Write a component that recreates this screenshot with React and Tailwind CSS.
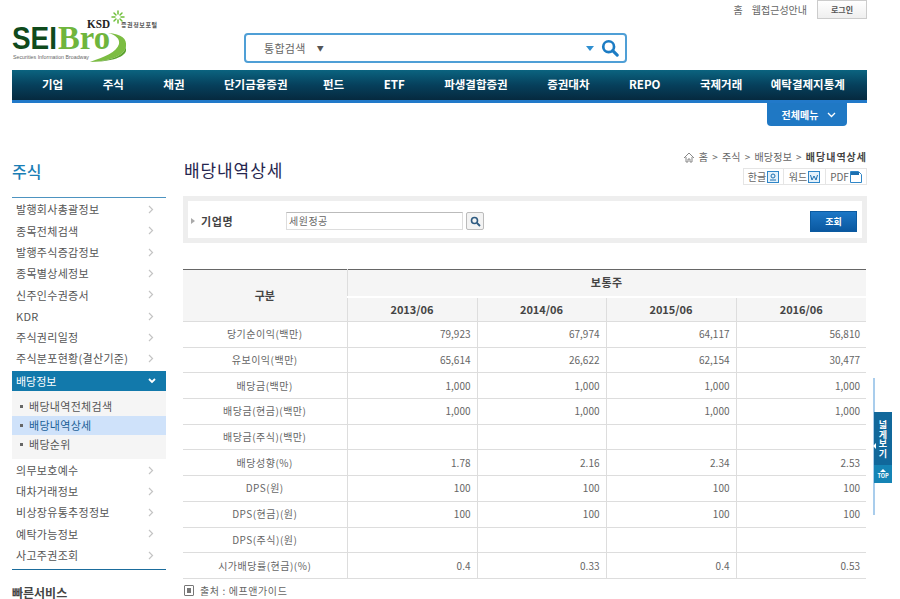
const K = { fontFamily: '"Noto Sans CJK KR", "Noto Sans", sans-serif' };
const nav = ['기업','주식','채권','단기금융증권','펀드','ETF','파생결합증권','증권대차','REPO','국제거래','예탁결제지통계'];
const side1 = ['발행회사총괄정보','종목전체검색','발행주식증감정보','종목별상세정보','신주인수권증서','KDR','주식권리일정','주식분포현황(결산기준)'];
const side2 = ['의무보호예수','대차거래정보','비상장유통추정정보','예탁가능정보','사고주권조회'];
const rows = [
  ['당기순이익(백만)','79,923','67,974','64,117','56,810'],
  ['유보이익(백만)','65,614','26,622','62,154','30,477'],
  ['배당금(백만)','1,000','1,000','1,000','1,000'],
  ['배당금(현금)(백만)','1,000','1,000','1,000','1,000'],
  ['배당금(주식)(백만)','','','',''],
  ['배당성향(%)','1.78','2.16','2.34','2.53'],
  ['DPS(원)','100','100','100','100'],
  ['DPS(현금)(원)','100','100','100','100'],
  ['DPS(주식)(원)','','','',''],
  ['시가배당률(현금)(%)','0.4','0.33','0.4','0.53'],
];

function Chevron() {
  return <svg width="6" height="9" viewBox="0 0 6 9" className="shrink-0"><path d="M1 1l3.5 3.5L1 8" fill="none" stroke="#c4c4c4" strokeWidth="1.2"/></svg>;
}
function Logo() {
  return (
    <div className="relative w-[150px] h-[58px] shrink-0">
      <svg width="150" height="58" viewBox="0 0 150 58" className="block">
        <path d="M96 23C110 24 115 29 114 36C113 45 100 51 78 52C92 47 105 42 107 34C108 29 104 25 96 23z" fill="#7cbd42"/>
        <path d="M114 36C113 45 100 51 78 52C96 52 112 48 114 41z" fill="#5ca32e"/>
        <text x="0" y="39" fontFamily="Liberation Sans" fontWeight="700" fontSize="32" fill="#0f4a1c" textLength="45" lengthAdjust="spacingAndGlyphs">SEI</text>
        <text x="46" y="39" fontFamily="Liberation Serif" fontWeight="700" fontSize="33" fill="#6fb53c" textLength="52" lengthAdjust="spacingAndGlyphs">Bro</text>
        <text x="75" y="18" fontFamily="Liberation Serif" fontWeight="700" fontSize="12" fill="#222" textLength="23" lengthAdjust="spacingAndGlyphs">KSD</text>
        <g stroke="#6fbf3a" strokeWidth="1.5" strokeLinecap="round">
          <path d="M106 4v-3M106 10v3M103 7h-3M109 7h3M104 5l-2-2M108 5l2-2M104 9l-2 2M108 9l2 2"/>
        </g>
        <text x="109" y="17" fontSize="6" fontWeight="700" fill="#555" style={K} textLength="36">증권정보포털</text>
        <text x="1" y="49" fontFamily="Liberation Sans" fontSize="6.2" fill="#666" textLength="76" lengthAdjust="spacingAndGlyphs">Securities Information Broadway</text>
      </svg>
    </div>
  );
}
function HwpIcon() {
  return <svg width="12" height="12" viewBox="0 0 12 12"><rect x=".5" y=".5" width="11" height="11" fill="#e3f1fb" stroke="#2f86c8"/><circle cx="6" cy="5" r="2" fill="none" stroke="#1c6fb0"/><path d="M3 9h6" stroke="#1c6fb0"/></svg>;
}
function WordIcon() {
  return <svg width="12" height="12" viewBox="0 0 12 12"><rect x=".5" y=".5" width="11" height="11" fill="#e3f1fb" stroke="#2f86c8"/><path d="M2.5 4l1.5 5 2-4 2 4 1.5-5" fill="none" stroke="#1c6fb0"/></svg>;
}
function PdfIcon() {
  return <svg width="12" height="12" viewBox="0 0 12 12"><path d="M.5.5h8l3 3v8h-11z" fill="#fff" stroke="#2f86c8"/><rect x="1" y="1" width="8" height="3" fill="#1c6fb0"/></svg>;
}

export default function App() {
  return (
    <div className="relative w-[900px] h-[599px] overflow-hidden bg-white text-[#555]" style={K}>
      {/* header */}
      <header className="relative mx-[12px] w-[855px] h-[103px]">
        <div className="flex justify-end items-center h-[19px] text-[10px] text-[#666] leading-none">
          <span className="mr-[9px]">홈</span>
          <span className="mr-[10px]">웹접근성안내</span>
          <span className="flex items-center justify-center w-[50px] h-[19px] border border-[#ccc] bg-gradient-to-b from-white to-[#efefef] text-[8px] font-bold text-[#555]">로그인</span>
        </div>
        <div className="flex h-[51px] items-start">
          <div className="-mt-[9px]"><Logo /></div>
          <div className="ml-[82px] mt-[14px] flex items-center w-[383px] h-[30px] border-2 border-[#4f9fd6] rounded-[4px] pl-[18px] pr-[4px]">
            <span className="text-[11px] text-[#666] tracking-[0.3px]">통합검색</span>
            <span className="ml-[11px] text-[7px] text-[#555]">▼</span>
            <svg width="8" height="5" viewBox="0 0 8 5" className="ml-auto mr-[7px]"><path d="M0 0h8L4 5z" fill="#2f8fd0"/></svg>
            <svg width="18" height="18" viewBox="0 0 20 20" className="mr-[2px]"><circle cx="8.5" cy="8.5" r="6" fill="none" stroke="#1c7cc4" strokeWidth="3"/><path d="M13 13l5 5" stroke="#1c7cc4" strokeWidth="3.4" strokeLinecap="round"/></svg>
          </div>
        </div>
        <nav className="flex items-center h-[33px] pl-[30px] gap-[39.5px] border-b-[3px] border-[#2179c9] bg-gradient-to-b from-[#0b6480] via-[#06405c] to-[#05293f] text-white text-[11.5px] font-bold leading-none whitespace-nowrap">
          {nav.map((n, i) => <span key={i} className={i === 10 ? '-ml-[11px]' : i === 3 ? 'mr-[-4px]' : ''}>{n}</span>)}
        </nav>
        <div className="absolute left-[755px] top-[103px] flex items-center justify-center gap-[9px] pl-[4px] w-[80px] h-[23px] bg-[#1f78c4] rounded-b-[4px] text-white text-[10px] font-bold leading-none">
          <span>전체메뉴</span>
          <svg width="9" height="6" viewBox="0 0 9 6"><path d="M1 1l3.5 3.5L8 1" fill="none" stroke="#fff" strokeWidth="1.3"/></svg>
        </div>
      </header>

      {/* body */}
      <div className="flex mx-[12px] w-[855px] pt-[50px] items-start">
        <aside className="w-[154px] shrink-0">
          <h2 className="h-[44px] pt-[7px] text-[16px] font-medium leading-[22px] text-[#1a7eb5]">주식</h2>
          <ul className="border-t border-[#4d93c0] pt-[1px] text-[11px] text-[#555]">
            {side1.map(s => (
              <li key={s} className="flex items-center justify-between h-[21.3px] pl-[4px] pr-[12px] tracking-[0.3px]"><span>{s}</span><Chevron /></li>
            ))}
          </ul>
          <div className="flex items-center justify-between h-[20px] mt-[2px] pl-[4px] pr-[10px] bg-[#1279ab] text-[11px] text-white">
            <span>배당정보</span>
            <svg width="8" height="6" viewBox="0 0 8 6"><path d="M1 1l3 3 3-3" fill="none" stroke="#fff" strokeWidth="1.8"/></svg>
          </div>
          <ul className="h-[68px] bg-[#f5f5f5] pt-[6px] text-[11px] leading-none text-[#555]">
            {['배당내역전체검색','배당내역상세','배당순위'].map((s, i) => (
              <li key={s} className={`flex items-center h-[19px] pl-[8px] tracking-[0.3px] ${i === 1 ? 'bg-[#cfe2fa] text-[#1a5e96]' : ''}`}>
                <span className="w-[3px] h-[3px] bg-[#666] mr-[6px]" />{s}
              </li>
            ))}
          </ul>
          <ul className="pb-[3px] text-[11px] text-[#555] border-b border-[#1b6c9c]">
            {side2.map(s => (
              <li key={s} className="flex items-center justify-between h-[21.3px] pl-[4px] pr-[12px] tracking-[0.3px]"><span>{s}</span><Chevron /></li>
            ))}
          </ul>
          <div className="mt-[17px] h-[12px] text-[12px] font-bold leading-[12px] text-[#444]">빠른서비스</div>
        </aside>

        <main className="ml-[17px] w-[684px] shrink-0">
          <div className="flex justify-end items-center h-[14px] mt-[-3px] text-[10px] text-[#666] leading-none tracking-[0.2px] gap-[4px]">
            <svg width="12" height="11" viewBox="0 0 12 11"><path d="M1 6l5-5 5 5M3 5v5h2V7h2v3h2V5" fill="none" stroke="#888" strokeWidth="1"/></svg>
            <span>홈</span><span>&gt;</span><span>주식</span><span>&gt;</span><span>배당정보</span><span>&gt;</span>
            <span className="font-bold text-[#444] tracking-[1px]">배당내역상세</span>
          </div>
          <div className="flex justify-between items-start mt-[1px]">
            <h1 className="-mt-[7px] pl-[1px] text-[17px] font-normal leading-[24px] tracking-[0.9px] text-[#26264f]">배당내역상세</h1>
            <div className="flex mt-[3px] h-[17px] border border-[#e5e5e5] text-[10px] text-[#666] leading-none">
              <span className="flex items-center gap-[1px] w-[40px] justify-center border-r border-[#e5e5e5]">한글<HwpIcon /></span>
              <span className="flex items-center gap-[1px] w-[42px] justify-center border-r border-[#e5e5e5]">워드<WordIcon /></span>
              <span className="flex items-center gap-[1px] w-[40px] justify-center">PDF<PdfIcon /></span>
            </div>
          </div>
          <div className="flex items-center mt-[11px] h-[47px] border-[5px] border-[#eeeeee] pt-[3px] pl-[3px] pr-[5px]">
            <svg width="4" height="6" viewBox="0 0 4 6"><path d="M0 0l4 3-4 3z" fill="#aaa"/></svg>
            <span className="ml-[6px] w-[85px] text-[11px] font-bold text-[#444] tracking-[0.6px]">기업명</span>
            <div className="flex items-center w-[177px] h-[18px] border border-[#ddd] border-t-[#bbb] px-[2px] text-[10px] text-[#666] tracking-[0.5px] leading-none">세원정공</div>
            <span className="flex items-center justify-center ml-[3px] w-[18px] h-[18px] border border-[#bbb] rounded-[2px] bg-[#f3f3f3]">
              <svg width="11" height="11" viewBox="0 0 11 11"><circle cx="4.5" cy="4.5" r="3" fill="none" stroke="#2d5a80" strokeWidth="1.6"/><path d="M7 7l3 3" stroke="#2d5a80" strokeWidth="1.8"/></svg>
            </span>
            <span className="ml-auto flex items-center justify-center w-[47px] h-[21px] border border-[#0b5aa0] bg-gradient-to-b from-[#1c77c6] to-[#0a58a0] text-[9px] font-bold text-white leading-none">조회</span>
          </div>

          <table className="mt-[26px] w-[683px] table-fixed border-collapse border-t border-[#666] text-[10px] text-[#666] leading-none">
            <colgroup><col className="w-[164px]" /><col className="w-[130px]" /><col className="w-[129px]" /><col className="w-[130px]" /><col className="w-[130px]" /></colgroup>
            <thead>
              <tr className="h-[27px]">
                <th rowSpan={2} className="bg-[#f5f5f5] border-b border-r border-[#ddd] text-[11px] font-bold text-[#444]">구분</th>
                <th colSpan={4} className="bg-[#f5f5f5] border-b-2 border-white text-[11px] font-bold text-[#444] tracking-[0.5px]">보통주</th>
              </tr>
              <tr className="h-[25px]">
                {['2013/06','2014/06','2015/06','2016/06'].map((y, i) => (
                  <th key={y} className={`bg-[#f5f5f5] border-b border-[#ddd] text-[11px] font-bold text-[#444] ${i < 3 ? 'border-r' : ''}`}>{y}</th>
                ))}
              </tr>
            </thead>
            <tbody>
              {rows.map((r, i) => (
                <tr key={i} className="h-[25.7px]">
                  <td className="border-b border-r border-[#ddd] text-center tracking-[0.5px]">{r[0]}</td>
                  {r.slice(1).map((c, j) => (
                    <td key={j} className={`border-b border-[#ddd] text-right pr-[6px] ${j < 3 ? 'border-r' : ''}`}>{c}</td>
                  ))}
                </tr>
              ))}
            </tbody>
          </table>
          <div className="flex items-center mt-[5px] h-[14px] text-[10px] text-[#666] tracking-[0.6px] leading-none">
            <span className="flex items-center justify-center w-[10px] h-[11px] border border-[#777] rounded-[1px] mr-[6px] ml-[1px]"><span className="w-[4px] h-[5px] bg-[#777]" /></span>
            출처 : 에프앤가이드
          </div>
        </main>
      </div>

      {/* floating widget */}
      <div className="absolute left-[873px] top-[378px] w-[2px] h-[137px] bg-[#a9cdec]" />
      <div className="absolute left-[874px] top-[412px] w-[18px] h-[71px] bg-[#11689b] text-white">
        <div className="h-[53px] pt-[8px] flex flex-col items-center text-[9px] font-bold leading-[9.5px]">
          <span>넓</span><span>게</span><span>보</span><span>기</span>
        </div>
        <div className="h-[18px] bg-[#1584b5] flex flex-col items-center justify-center text-[5.5px] font-bold leading-none">
          <svg width="6" height="3" viewBox="0 0 6 3" className="mb-[2px]"><path d="M0 3l3-3 3 3z" fill="#fff"/></svg>
          TOP
        </div>
        <svg width="3" height="6" viewBox="0 0 3 6" className="absolute -left-[1px] top-[31px]"><path d="M3 0v6L0 3z" fill="#fff"/></svg>
      </div>
    </div>
  );
}
